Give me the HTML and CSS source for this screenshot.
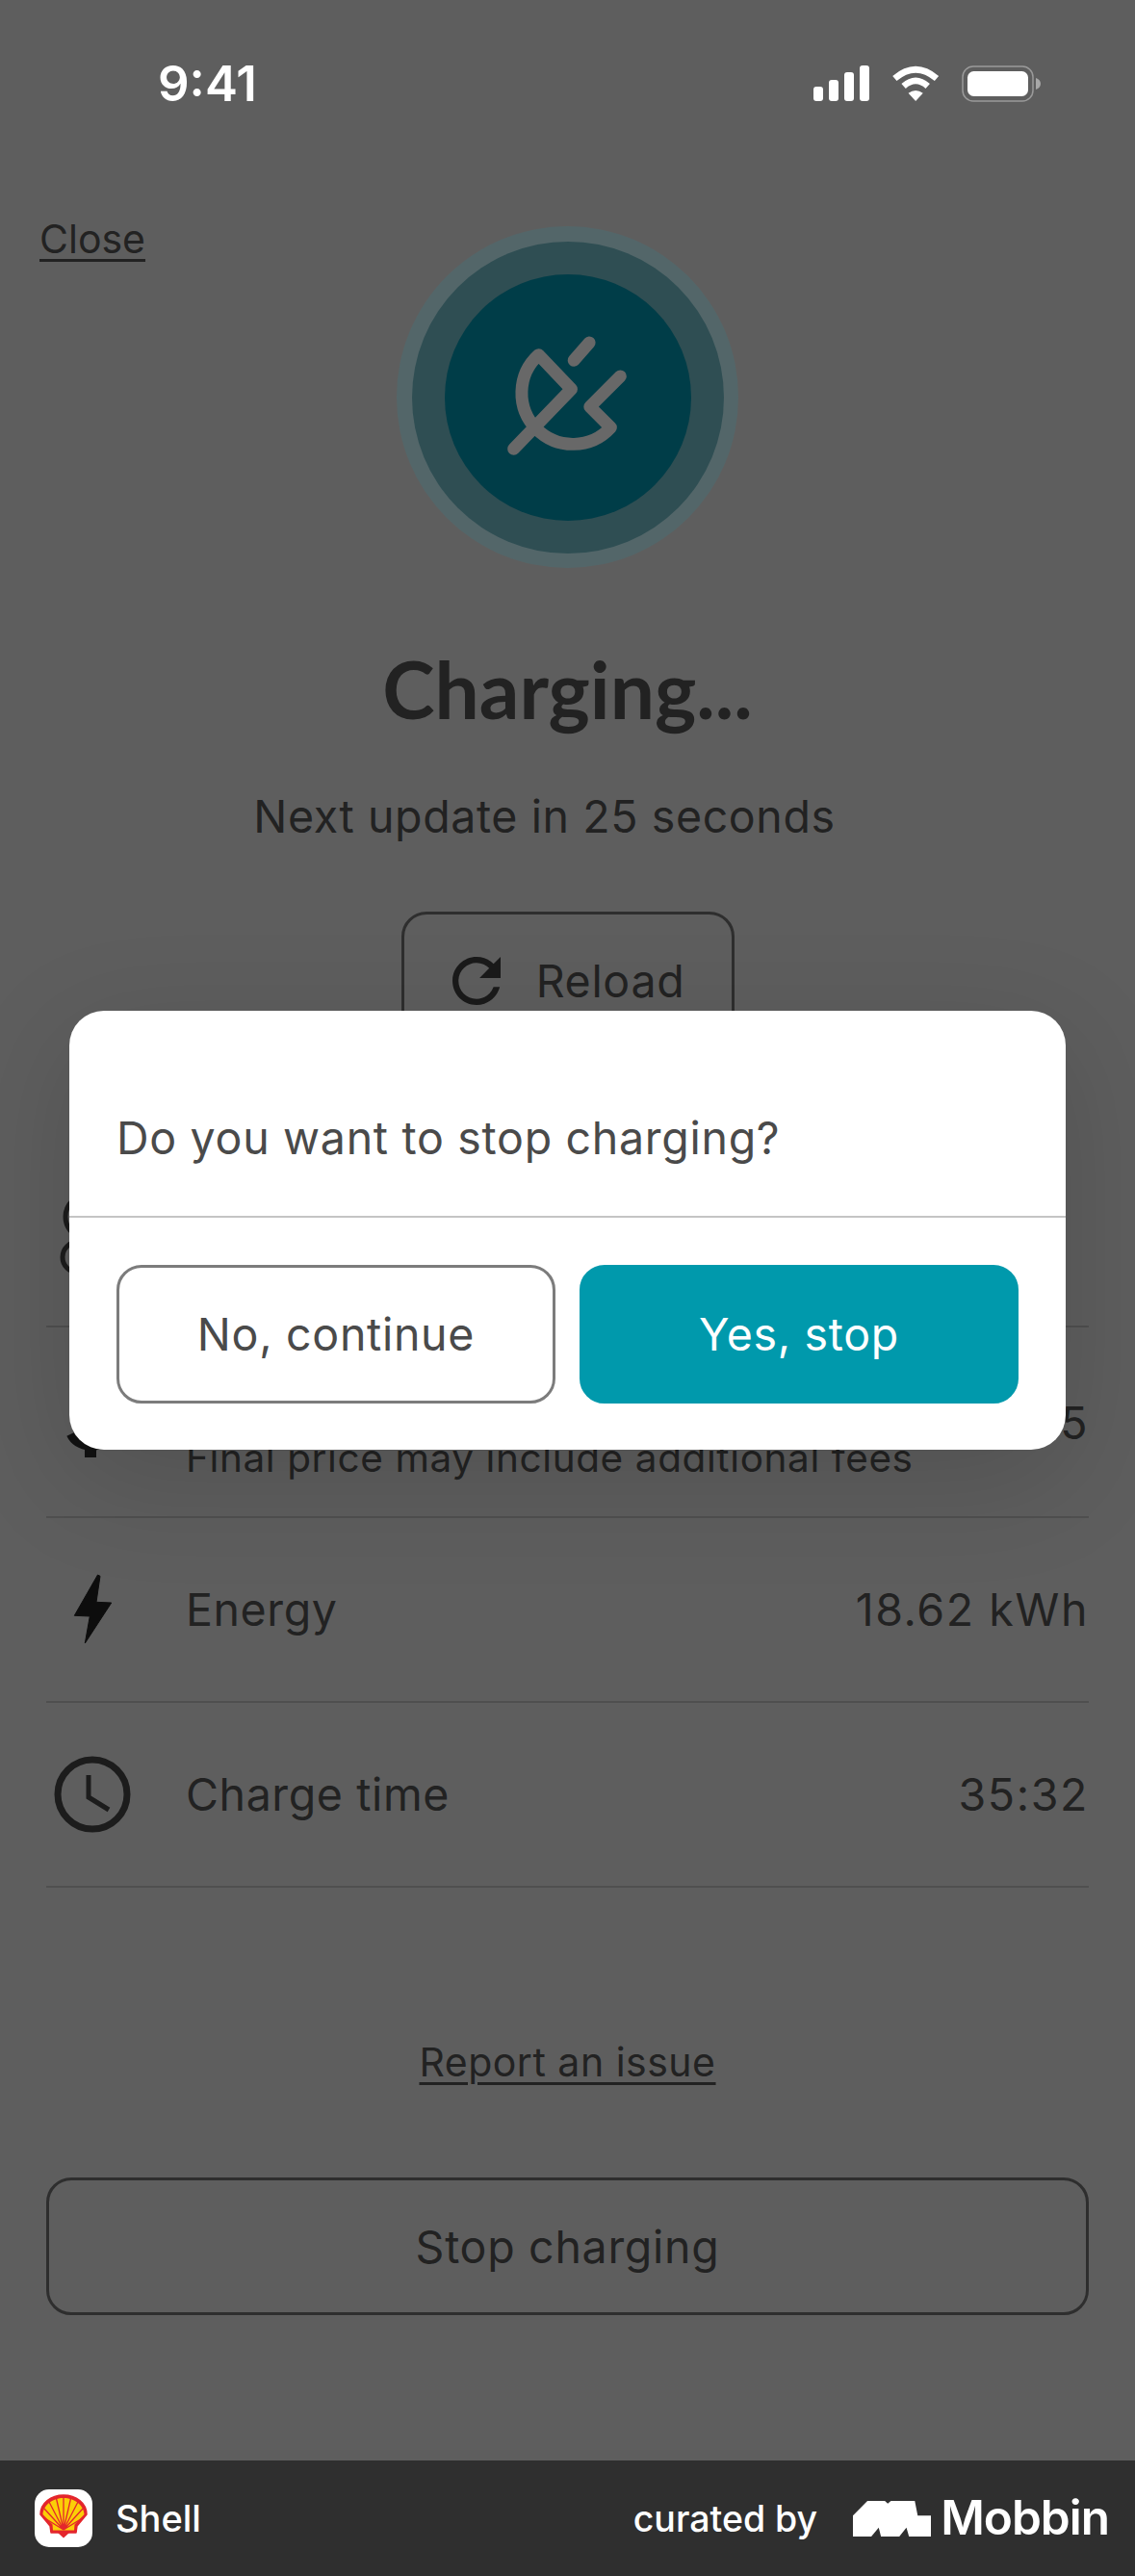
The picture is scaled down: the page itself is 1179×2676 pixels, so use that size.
FILE: index.html
```html
<!DOCTYPE html>
<html lang="en">
<head>
<meta charset="utf-8">
<title>Shell charging</title>
<link rel="stylesheet" href="styles.css">
</head>
<body>
<div class="screen">
  <header class="status">
    <span class="time">9:41</span>
    <div class="status-icons">
      <svg class="sig" viewBox="0 0 58 37"><rect x="0" y="22" width="10" height="15" rx="3"/><rect x="16" y="15" width="10" height="22" rx="3"/><rect x="32" y="7" width="10" height="30" rx="3"/><rect x="48" y="0" width="10" height="37" rx="3"/></svg>
      <svg class="wifi" viewBox="440 85 155 112"><path d="M452 126Q518 70 584 126M480 150Q518 116 556 150" fill="none" stroke="#fff" stroke-width="20"/><path d="M518 197 495 172Q518 155 541 172Z" fill="#fff"/></svg>
      <svg class="batt" viewBox="0 0 82 38"><rect x="1" y="1" width="73" height="36" rx="11" fill="none" stroke="#9a9a9a" stroke-width="1.500"/><rect x="6" y="6" width="63" height="26" rx="6.500" fill="#fff"/><path d="M77 13v12c3-1 5-3 5-6s-2-5-5-6z" fill="#a8a8a8"/></svg>
    </div>
  </header>

  <main class="content">
    <section class="hero">
      <a class="close">Close</a>
      <div class="halo">
        <div class="halo-ring">
          <div class="disc">
            <svg class="plug" viewBox="430 410 400 400"><g fill="none" stroke="#686868" stroke-width="39" stroke-linecap="round" stroke-linejoin="round"><path d="M462 772 642 585 540 478A160 160 0 1 0 765 705L700 640 795 545"/><path d="M650 495 698 440"/></g></svg>
          </div>
        </div>
      </div>
      <h1 class="title">Charging...</h1>
      <p class="next">Next update in 25 seconds</p>
      <button class="btn reload">
        <svg class="reload-icon" viewBox="4 4 16 16"><path d="M17.650 6.350A7.958 7.958 0 0 0 12 4c-4.420 0-7.990 3.580-7.990 8s3.570 8 7.990 8c3.730 0 6.840-2.550 7.730-6h-2.080A5.990 5.990 0 0 1 12 18c-3.310 0-6-2.690-6-6s2.690-6 6-6c1.660 0 3.140.690 4.220 1.780L13 11h7V4l-2.350 2.350z" fill="#1a1a1a"/></svg>
        <span>Reload</span>
      </button>
    </section>

    <section class="rows">
      <div class="row row-first">
        <svg class="icon icon-status" viewBox="0 0 80 80"><circle cx="35" cy="42" r="23" fill="none" stroke="#1c1c1c" stroke-width="5"/><circle cx="25" cy="84" r="16" fill="none" stroke="#1c1c1c" stroke-width="5"/></svg>
      </div>
      <div class="row row-price">
        <svg class="icon icon-price" viewBox="0 0 80 80"><path d="M17 55Q22 66 38 68C60 68 60 40 38 38 18 36 20 12 38 12 52 12 58 24 58 24" fill="none" stroke="#111" stroke-width="8"/><path d="M32 0H44V79H32Z" fill="#111"/></svg>
        <div class="label label-note">Final price may include additional fees</div>
        <span class="value">€ 9.15</span>
      </div>
      <div class="row">
        <svg class="icon" viewBox="56 33 80 80"><path d="M101.500 37 77.300 79.300 93.300 80 88.300 108 115.700 66 100 65.300 104 38.300Z" fill="#0d0d0d" stroke="#0d0d0d" stroke-linejoin="round"/></svg>
        <div class="label">Energy</div>
        <span class="value">18.62 kWh</span>
      </div>
      <div class="row">
        <svg class="icon" viewBox="0 0 80 80"><circle cx="40" cy="40" r="36" fill="none" stroke="#1c1c1c" stroke-width="7"/><path d="M36 20V43L57 56" fill="none" stroke="#1c1c1c" stroke-width="5"/></svg>
        <div class="label">Charge time</div>
        <span class="value">35:32</span>
      </div>
    </section>

    <a class="report">Report an issue</a>
    <button class="btn stop">Stop charging</button>
  </main>

  <div class="dialog">
    <p class="dialog-text">Do you want to stop charging?</p>
    <div class="dialog-actions">
      <button class="dlg-btn dlg-no">No, continue</button>
      <button class="dlg-btn dlg-yes">Yes, stop</button>
    </div>
  </div>
</div>

<footer class="footer">
  <div class="brand">
    <span class="app-icon">
      <svg viewBox="0 0 60 60" width="60" height="60">
        <path d="M17 45H43L44 38 54 26C54 14 43 6 30 6S6 14 6 26L16 38Z" fill="#e4262c" stroke="#e4262c" stroke-width="1.500" stroke-linejoin="round"/>
        <path d="M30 50.500 24 45H36Z" fill="#e4262c"/>
        <path d="M19 42.500H41L41.500 36.500 51.500 26C51 16 41 9 30 9S9 16 8.500 26L18.500 36.500Z" fill="#fbce07"/>
        <path d="M30 42 30 9M30 42 22.500 9.500M30 42 37.500 9.500M30 42 15 13M30 42 45 13M30 42 10 20M30 42 50 20M30 42 9 29M30 42 51 29" stroke="#e4262c" stroke-width="1.300" fill="none"/>
      </svg>
    </span>
    <span class="brand-name">Shell</span>
  </div>
  <div class="credit">
    <span class="curated">curated by</span>
    <svg class="mobbin-mark" viewBox="78 77 242 113"><path d="M78 190V125L123 80H177L186 88 196 80H270L279 125H320V190H252L244 163 222 190H165L158 163 135 190Z" fill="#fff"/></svg>
    <span class="mobbin">Mobbin</span>
  </div>
</footer>
</body>
</html>
```
FILE: styles.css
```css
* { box-sizing: border-box; }
html, body { margin: 0; padding: 0; }
body { width: 1179px; height: 2676px; font-family: Inter, "Liberation Sans", sans-serif; background: #2f2f2f; color: #222; overflow: hidden; }

.screen { position: relative; width: 1179px; height: 2556px; background: #5e5e5e; }

.status { height: 135px; display: flex; justify-content: space-between; align-items: center; padding: 38px 98px 0 164px; color: #fff; }
.time { font-size: 51px; font-weight: 600; line-height: 1; }
.status-icons { display: flex; align-items: center; gap: 22px; }
.sig { width: 58px; height: 37px; fill: #fff; }
.wifi { width: 52px; height: 37px; }
.batt { width: 82px; height: 38px; }

.content { display: flex; flex-direction: column; }

.hero { display: flex; flex-direction: column; align-items: center; position: relative; }
.close { position: absolute; left: 41px; top: 89px; font-size: 41px; line-height: 48px; text-decoration: underline; text-decoration-thickness: 3px; text-underline-offset: 6px; color: #222; }
.halo { margin-top: 100px; width: 355px; height: 355px; border-radius: 50%; display: flex; align-items: center; justify-content: center; background: radial-gradient(circle, #536669 88%, #5a6a6c 95%, #5c6869 100%); }
.halo-ring { width: 324px; height: 324px; border-radius: 50%; display: flex; align-items: center; justify-content: center; background: radial-gradient(circle, #2f4e53 79%, #3d5357 88%, #465a5d 100%); }
.disc { width: 256px; height: 256px; border-radius: 50%; background: #003d48; display: flex; align-items: center; justify-content: center; }
.plug { width: 133px; height: 133px; }
.title { margin: 81px 0 0; font-family: Lato, sans-serif; font-weight: 700; font-size: 82px; line-height: 88px; color: #222; }
.next { margin: 62px 48px 0 0; font-size: 46.500px; line-height: 54px; color: #222; letter-spacing: .6px; }

.btn { font-family: inherit; background: none; border: 3px solid #2e2e2e; border-radius: 26px; color: #222; font-size: 46.500px; letter-spacing: .7px; }
.reload { margin-top: 72px; width: 346px; height: 143px; padding-left: 8px; display: flex; align-items: center; justify-content: center; gap: 37px; }
.reload-icon { width: 50px; height: 50px; flex: none; }

.rows { margin: 0 48px; padding-top: 57px; display: flex; flex-direction: column; }
.row { height: 192px; border-bottom: 2px solid #4f4f4f; display: flex; align-items: center; font-size: 46.500px; letter-spacing: .6px; }
.row-first { height: 232px; }
.row-price { height: 198px; align-items: flex-start; padding-top: 71px; }
.icon { width: 80px; height: 80px; margin-left: 8px; flex: none; }
.icon-status { overflow: visible; }
.icon-price { margin-top: -15px; }
.label { margin-left: 57px; flex: 1; }
.label-note { margin-top: 42px; font-size: 40.500px; line-height: 46px; }
.value { text-align: right; letter-spacing: 1.600px; }

.report { margin: 157px auto 0; font-size: 41px; line-height: 48px; text-decoration: underline; text-decoration-thickness: 3px; text-underline-offset: 6px; letter-spacing: .5px; }
.stop { margin: 96px 48px 0; height: 143px; }

.dialog { position: absolute; left: 72px; top: 1050px; width: 1035px; height: 456px; background: #fff; border-radius: 36px; box-shadow: 0 30px 120px rgba(0,0,0,.14); }
.dialog-text { margin: 0; height: 215px; padding: 0 49px 54px; display: flex; align-items: flex-end; border-bottom: 2px solid #c4c4c4; font-size: 46.500px; line-height: 54px; letter-spacing: .7px; color: #4a4a4a; }
.dialog-actions { display: flex; gap: 25px; padding: 49px 49px; }
.dlg-btn { flex: 1; height: 144px; border-radius: 26px; border: 3px solid; font-family: inherit; font-size: 46.500px; letter-spacing: .7px; }
.dlg-no { background: #fff; border-color: #7c7c7c; color: #4a4a4a; }
.dlg-yes { background: #0099ac; border-color: #0099ac; color: #fff; }

.footer { height: 120px; background: #2f2f2f; display: flex; justify-content: space-between; align-items: center; padding: 0 27px 0 36px; color: #fff; }
.brand { display: flex; align-items: center; gap: 24px; }
.app-icon { width: 60px; height: 60px; background: #fff; border-radius: 15px; display: block; overflow: hidden; }
.brand-name { font-size: 38px; font-weight: 500; }
.credit { display: flex; align-items: center; }
.curated { font-size: 37.500px; font-weight: 500; margin-right: 37px; }
.mobbin-mark { width: 81px; height: 38px; margin-right: 10px; }
.mobbin { font-size: 49.500px; font-weight: 600; letter-spacing: -1px; line-height: 1; }
```
